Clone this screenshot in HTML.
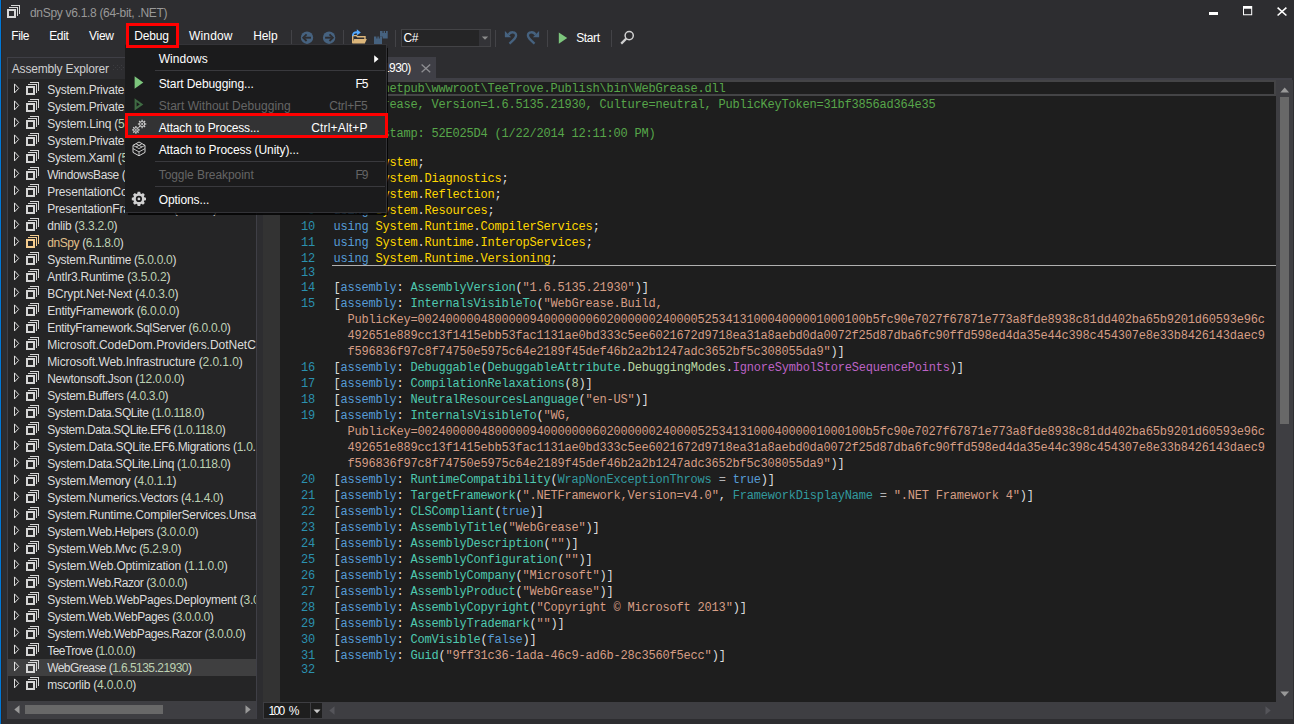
<!DOCTYPE html>
<html><head><meta charset="utf-8"><title>dnSpy</title><style>
html,body{margin:0;padding:0;overflow:hidden;}
html{width:1294px;height:724px;background:#2d2d30;}
body{width:1294px;height:724px;background:#2d2d30;position:relative;overflow:hidden;font-family:"Liberation Sans", sans-serif;}
.t{position:absolute;white-space:pre;font-family:"Liberation Sans", sans-serif;}
.m{font-family:"Liberation Mono", monospace;}
.clip{position:absolute;overflow:hidden;}
</style></head><body>
<div style="position:absolute;left:0px;top:0px;width:1px;height:724px;background:#0078d7;"></div>
<div style="position:absolute;left:1px;top:0px;width:1px;height:724px;background:#2b2729;"></div>
<svg style="position:absolute;left:7px;top:5px;" width="13" height="13" viewBox="0 0 13 13"><path fill="#d8d8d8" fill-rule="evenodd" d="M4,0H13V9H12V1H4Z M2,2H11V11H10V3H2Z M0,4H9V13H0Z M2,6V11H7V6Z"/></svg>
<span id="t67da5d49" class="t" style="left:30px;top:5.0px;line-height:16px;font-size:12px;color:#999999;letter-spacing:-0.304px;">dnSpy v6.1.8 (64-bit, .NET)</span>
<div style="position:absolute;left:1209px;top:11.6px;width:9.3px;height:3px;background:#ffffff;"></div>
<svg style="position:absolute;left:1242.9px;top:5.8px;" width="10" height="10" viewBox="0 0 10 10"><path fill="#fff" fill-rule="evenodd" d="M0,0H9.2V9.3H0Z M1,2.7V8.3H8.2V2.7Z"/></svg>
<svg style="position:absolute;left:1277px;top:6.6px;" width="11" height="10" viewBox="0 0 11 10"><path stroke="#fff" stroke-width="1.6" fill="none" d="M0.6,0.7L9.4,8.5M9.4,0.7L0.6,8.5"/></svg>
<span id="t30e0f102" class="t" style="left:11.3px;top:27.5px;line-height:16px;font-size:12px;color:#ffffff;letter-spacing:-0.412px;">File</span>
<span id="tb5fae09c" class="t" style="left:49.2px;top:27.5px;line-height:16px;font-size:12px;color:#ffffff;letter-spacing:-0.359px;">Edit</span>
<span id="tcee6a132" class="t" style="left:89.0px;top:27.5px;line-height:16px;font-size:12px;color:#ffffff;letter-spacing:-0.264px;">View</span>
<span id="t6776c0da" class="t" style="left:189px;top:27.5px;line-height:16px;font-size:12px;color:#ffffff;letter-spacing:0.164px;">Window</span>
<span id="td5279522" class="t" style="left:253.2px;top:27.5px;line-height:16px;font-size:12px;color:#ffffff;letter-spacing:-0.093px;">Help</span>
<div style="position:absolute;left:291.2px;top:29.5px;width:1px;height:17.5px;background:#434347;"></div>
<div style="position:absolute;left:342.9px;top:29.5px;width:1px;height:17.5px;background:#434347;"></div>
<div style="position:absolute;left:394.9px;top:29.5px;width:1px;height:17.5px;background:#434347;"></div>
<div style="position:absolute;left:495.4px;top:29.5px;width:1px;height:17.5px;background:#434347;"></div>
<div style="position:absolute;left:546.8px;top:29.5px;width:1px;height:17.5px;background:#434347;"></div>
<div style="position:absolute;left:611.1px;top:29.5px;width:1px;height:17.5px;background:#434347;"></div>
<svg style="position:absolute;left:300px;top:31px;" width="14" height="14" viewBox="0 0 14 14"><circle cx="7" cy="6.7" r="6.2" fill="#46627f"/><path d="M11,6.7H4.4" stroke="#2d2d30" stroke-width="1.9" fill="none"/><path d="M6.6,3.4L3.2,6.7L6.6,10" stroke="#2d2d30" stroke-width="1.8" fill="none"/></svg>
<svg style="position:absolute;left:322px;top:31px;" width="14" height="14" viewBox="0 0 14 14"><circle cx="7.1" cy="6.7" r="6.2" fill="#46627f"/><path d="M3.1,6.7H9.7" stroke="#2d2d30" stroke-width="1.9" fill="none"/><path d="M7.5,3.4L10.9,6.7L7.5,10" stroke="#2d2d30" stroke-width="1.8" fill="none"/></svg>
<svg style="position:absolute;left:351px;top:28.2px;" width="17" height="17" viewBox="0 0 17 17"><path d="M1.7,15V7.6H5.4L6.5,8.7H14V11" fill="none" stroke="#dcb67a" stroke-width="1.4"/><path d="M3.2,11H15.8L13.8,15.4H1.2Z" fill="#dcb67a"/><path d="M1.9,8.2C1.6,5.2 3.4,4 6.6,4.3" fill="none" stroke="#55aaff" stroke-width="1.8"/><path d="M5.8,1.2L9.8,4.4L5.8,7.6Z" fill="#55aaff"/></svg>
<svg style="position:absolute;left:373px;top:30px;" width="16" height="16" viewBox="0 0 16 16"><path fill="#46627f" fill-rule="evenodd" d="M7,0.9H14.7V8.6H9.6V6.6H7Z M9.6,0.9V2.9H10.6V0.9Z M12,0.9V2.9H13,V0.9Z"/><path fill="#46627f" fill-rule="evenodd" d="M1,6.6H9V14H1Z M3.4,6.6V8.6H4.4V6.6Z M5.8,6.6V8.6H6.8V6.6Z"/></svg>
<div style="position:absolute;left:401px;top:29px;width:89.5px;height:18px;background:#252526;border:1px solid #434346;box-sizing:border-box;"></div>
<div style="position:absolute;left:478.5px;top:30px;width:11px;height:16px;background:#333337;"></div>
<svg style="position:absolute;left:480.8px;top:36.2px;" width="8" height="5" viewBox="0 0 8 5"><path d="M0.8,0.4H7.2L4,3.8Z" fill="#8c8c8c"/></svg>
<span id="te251bf2a" class="t" style="left:403.4px;top:30.0px;line-height:16px;font-size:12px;color:#ffffff;letter-spacing:-0.240px;">C#</span>
<svg style="position:absolute;left:504px;top:30px;" width="14" height="15" viewBox="0 0 14 15"><path d="M0.9,1.0V7.2H7.1Z" fill="#46627f"/><path d="M4.6,4.8C6,1.4 12.2,1.2 12.1,5.6C12,8 9.5,10 5.4,13.6" fill="none" stroke="#46627f" stroke-width="2.3"/></svg>
<svg style="position:absolute;left:526px;top:30px;" width="14" height="15" viewBox="0 0 14 15"><g transform="translate(14,0) scale(-1,1)"><path d="M0.9,1.0V7.2H7.1Z" fill="#46627f"/><path d="M4.6,4.8C6,1.4 12.2,1.2 12.1,5.6C12,8 9.5,10 5.4,13.6" fill="none" stroke="#46627f" stroke-width="2.3"/></g></svg>
<svg style="position:absolute;left:558px;top:32px;" width="10" height="12" viewBox="0 0 10 12"><path d="M0.8,0.4L9.2,6L0.8,11.7Z" fill="#7dc67d"/></svg>
<span id="t14c7030c" class="t" style="left:576.2px;top:30.0px;line-height:16px;font-size:12px;color:#ffffff;letter-spacing:-0.385px;">Start</span>
<svg style="position:absolute;left:620px;top:30px;" width="15" height="15" viewBox="0 0 15 15"><circle cx="9.2" cy="5.6" r="4.1" fill="none" stroke="#d0d0d0" stroke-width="1.5"/><path d="M6.2,8.6L1.2,13.6" stroke="#d0d0d0" stroke-width="2.2"/></svg>
<div style="position:absolute;left:7px;top:57px;width:250px;height:662px;background:#2d2d30;border:1px solid #3f3f46;box-sizing:border-box;"></div>
<span id="t333f8483" class="t" style="left:11.8px;top:60.5px;line-height:16px;font-size:12px;color:#d0d0d0;letter-spacing:-0.177px;">Assembly Explorer</span>
<svg style="position:absolute;left:113px;top:65px;" width="140" height="6" viewBox="0 0 140 6"><g fill="#3c3c40"><rect x="0" y="0" width="1" height="1"/><rect x="2" y="2" width="1" height="1"/><rect x="0" y="4" width="1" height="1"/><rect x="4" y="0" width="1" height="1"/><rect x="6" y="2" width="1" height="1"/><rect x="4" y="4" width="1" height="1"/><rect x="8" y="0" width="1" height="1"/><rect x="10" y="2" width="1" height="1"/><rect x="8" y="4" width="1" height="1"/><rect x="12" y="0" width="1" height="1"/><rect x="14" y="2" width="1" height="1"/><rect x="12" y="4" width="1" height="1"/><rect x="16" y="0" width="1" height="1"/><rect x="18" y="2" width="1" height="1"/><rect x="16" y="4" width="1" height="1"/><rect x="20" y="0" width="1" height="1"/><rect x="22" y="2" width="1" height="1"/><rect x="20" y="4" width="1" height="1"/><rect x="24" y="0" width="1" height="1"/><rect x="26" y="2" width="1" height="1"/><rect x="24" y="4" width="1" height="1"/><rect x="28" y="0" width="1" height="1"/><rect x="30" y="2" width="1" height="1"/><rect x="28" y="4" width="1" height="1"/><rect x="32" y="0" width="1" height="1"/><rect x="34" y="2" width="1" height="1"/><rect x="32" y="4" width="1" height="1"/><rect x="36" y="0" width="1" height="1"/><rect x="38" y="2" width="1" height="1"/><rect x="36" y="4" width="1" height="1"/><rect x="40" y="0" width="1" height="1"/><rect x="42" y="2" width="1" height="1"/><rect x="40" y="4" width="1" height="1"/><rect x="44" y="0" width="1" height="1"/><rect x="46" y="2" width="1" height="1"/><rect x="44" y="4" width="1" height="1"/><rect x="48" y="0" width="1" height="1"/><rect x="50" y="2" width="1" height="1"/><rect x="48" y="4" width="1" height="1"/><rect x="52" y="0" width="1" height="1"/><rect x="54" y="2" width="1" height="1"/><rect x="52" y="4" width="1" height="1"/><rect x="56" y="0" width="1" height="1"/><rect x="58" y="2" width="1" height="1"/><rect x="56" y="4" width="1" height="1"/><rect x="60" y="0" width="1" height="1"/><rect x="62" y="2" width="1" height="1"/><rect x="60" y="4" width="1" height="1"/><rect x="64" y="0" width="1" height="1"/><rect x="66" y="2" width="1" height="1"/><rect x="64" y="4" width="1" height="1"/><rect x="68" y="0" width="1" height="1"/><rect x="70" y="2" width="1" height="1"/><rect x="68" y="4" width="1" height="1"/><rect x="72" y="0" width="1" height="1"/><rect x="74" y="2" width="1" height="1"/><rect x="72" y="4" width="1" height="1"/><rect x="76" y="0" width="1" height="1"/><rect x="78" y="2" width="1" height="1"/><rect x="76" y="4" width="1" height="1"/><rect x="80" y="0" width="1" height="1"/><rect x="82" y="2" width="1" height="1"/><rect x="80" y="4" width="1" height="1"/><rect x="84" y="0" width="1" height="1"/><rect x="86" y="2" width="1" height="1"/><rect x="84" y="4" width="1" height="1"/><rect x="88" y="0" width="1" height="1"/><rect x="90" y="2" width="1" height="1"/><rect x="88" y="4" width="1" height="1"/><rect x="92" y="0" width="1" height="1"/><rect x="94" y="2" width="1" height="1"/><rect x="92" y="4" width="1" height="1"/><rect x="96" y="0" width="1" height="1"/><rect x="98" y="2" width="1" height="1"/><rect x="96" y="4" width="1" height="1"/><rect x="100" y="0" width="1" height="1"/><rect x="102" y="2" width="1" height="1"/><rect x="100" y="4" width="1" height="1"/><rect x="104" y="0" width="1" height="1"/><rect x="106" y="2" width="1" height="1"/><rect x="104" y="4" width="1" height="1"/><rect x="108" y="0" width="1" height="1"/><rect x="110" y="2" width="1" height="1"/><rect x="108" y="4" width="1" height="1"/><rect x="112" y="0" width="1" height="1"/><rect x="114" y="2" width="1" height="1"/><rect x="112" y="4" width="1" height="1"/><rect x="116" y="0" width="1" height="1"/><rect x="118" y="2" width="1" height="1"/><rect x="116" y="4" width="1" height="1"/><rect x="120" y="0" width="1" height="1"/><rect x="122" y="2" width="1" height="1"/><rect x="120" y="4" width="1" height="1"/><rect x="124" y="0" width="1" height="1"/><rect x="126" y="2" width="1" height="1"/><rect x="124" y="4" width="1" height="1"/><rect x="128" y="0" width="1" height="1"/><rect x="130" y="2" width="1" height="1"/><rect x="128" y="4" width="1" height="1"/><rect x="132" y="0" width="1" height="1"/><rect x="134" y="2" width="1" height="1"/><rect x="132" y="4" width="1" height="1"/></g></svg>
<div style="position:absolute;left:8px;top:79px;width:248px;height:622px;background:#252526;"></div>
<div class="clip" style="left:8px;top:80px;width:248px;height:620px;">
<svg style="position:absolute;left:5px;top:2.5px;" width="8" height="12" viewBox="0 0 8 12"><path d="M1.5,0.9L5.7,5.4L1.5,9.9Z" fill="none" stroke="#e0e0e0" stroke-width="1"/></svg>
<svg style="position:absolute;left:18px;top:2px;" width="13" height="13" viewBox="0 0 13 13"><path fill="#d6d6d6" fill-rule="evenodd" d="M4,0H13V9H12V1H4Z M2,2H11V11H10V3H2Z M0,4H9V13H0Z M2,6V11H7V6Z"/></svg>
<span id="t3e045100" class="t" style="left:39.2px;top:1.5px;line-height:17px;font-size:12px;color:#dcdcdc;letter-spacing:-0.268px;">System.Private.CoreLib <span style="color:#dcdcdc">(<span style="color:#bcd1b1">5</span>.<span style="color:#bcd1b1">0</span>.<span style="color:#bcd1b1">0</span>.<span style="color:#bcd1b1">0</span>)</span></span>
<svg style="position:absolute;left:5px;top:19.5px;" width="8" height="12" viewBox="0 0 8 12"><path d="M1.5,0.9L5.7,5.4L1.5,9.9Z" fill="none" stroke="#e0e0e0" stroke-width="1"/></svg>
<svg style="position:absolute;left:18px;top:19px;" width="13" height="13" viewBox="0 0 13 13"><path fill="#d6d6d6" fill-rule="evenodd" d="M4,0H13V9H12V1H4Z M2,2H11V11H10V3H2Z M0,4H9V13H0Z M2,6V11H7V6Z"/></svg>
<span id="t5269d351" class="t" style="left:39.2px;top:18.5px;line-height:17px;font-size:12px;color:#dcdcdc;letter-spacing:-0.268px;">System.Private.Uri <span style="color:#dcdcdc">(<span style="color:#bcd1b1">5</span>.<span style="color:#bcd1b1">0</span>.<span style="color:#bcd1b1">0</span>.<span style="color:#bcd1b1">0</span>)</span></span>
<svg style="position:absolute;left:5px;top:36.5px;" width="8" height="12" viewBox="0 0 8 12"><path d="M1.5,0.9L5.7,5.4L1.5,9.9Z" fill="none" stroke="#e0e0e0" stroke-width="1"/></svg>
<svg style="position:absolute;left:18px;top:36px;" width="13" height="13" viewBox="0 0 13 13"><path fill="#d6d6d6" fill-rule="evenodd" d="M4,0H13V9H12V1H4Z M2,2H11V11H10V3H2Z M0,4H9V13H0Z M2,6V11H7V6Z"/></svg>
<span id="tb27f8752" class="t" style="left:39.2px;top:35.5px;line-height:17px;font-size:12px;color:#dcdcdc;letter-spacing:-0.188px;">System.Linq <span style="color:#dcdcdc">(<span style="color:#bcd1b1">5</span>.<span style="color:#bcd1b1">0</span>.<span style="color:#bcd1b1">0</span>.<span style="color:#bcd1b1">0</span>)</span></span>
<svg style="position:absolute;left:5px;top:53.5px;" width="8" height="12" viewBox="0 0 8 12"><path d="M1.5,0.9L5.7,5.4L1.5,9.9Z" fill="none" stroke="#e0e0e0" stroke-width="1"/></svg>
<svg style="position:absolute;left:18px;top:53px;" width="13" height="13" viewBox="0 0 13 13"><path fill="#d6d6d6" fill-rule="evenodd" d="M4,0H13V9H12V1H4Z M2,2H11V11H10V3H2Z M0,4H9V13H0Z M2,6V11H7V6Z"/></svg>
<span id="ta4e3a844" class="t" style="left:39.2px;top:52.5px;line-height:17px;font-size:12px;color:#dcdcdc;letter-spacing:-0.268px;">System.Private.Xml <span style="color:#dcdcdc">(<span style="color:#bcd1b1">5</span>.<span style="color:#bcd1b1">0</span>.<span style="color:#bcd1b1">0</span>.<span style="color:#bcd1b1">0</span>)</span></span>
<svg style="position:absolute;left:5px;top:70.5px;" width="8" height="12" viewBox="0 0 8 12"><path d="M1.5,0.9L5.7,5.4L1.5,9.9Z" fill="none" stroke="#e0e0e0" stroke-width="1"/></svg>
<svg style="position:absolute;left:18px;top:70px;" width="13" height="13" viewBox="0 0 13 13"><path fill="#d6d6d6" fill-rule="evenodd" d="M4,0H13V9H12V1H4Z M2,2H11V11H10V3H2Z M0,4H9V13H0Z M2,6V11H7V6Z"/></svg>
<span id="t401e9754" class="t" style="left:39.2px;top:69.5px;line-height:17px;font-size:12px;color:#dcdcdc;letter-spacing:-0.293px;">System.Xaml <span style="color:#dcdcdc">(<span style="color:#bcd1b1">5</span>.<span style="color:#bcd1b1">0</span>.<span style="color:#bcd1b1">0</span>.<span style="color:#bcd1b1">0</span>)</span></span>
<svg style="position:absolute;left:5px;top:87.5px;" width="8" height="12" viewBox="0 0 8 12"><path d="M1.5,0.9L5.7,5.4L1.5,9.9Z" fill="none" stroke="#e0e0e0" stroke-width="1"/></svg>
<svg style="position:absolute;left:18px;top:87px;" width="13" height="13" viewBox="0 0 13 13"><path fill="#d6d6d6" fill-rule="evenodd" d="M4,0H13V9H12V1H4Z M2,2H11V11H10V3H2Z M0,4H9V13H0Z M2,6V11H7V6Z"/></svg>
<span id="t6494964a" class="t" style="left:39.2px;top:86.5px;line-height:17px;font-size:12px;color:#dcdcdc;letter-spacing:-0.403px;">WindowsBase <span style="color:#dcdcdc">(<span style="color:#bcd1b1">5</span>.<span style="color:#bcd1b1">0</span>.<span style="color:#bcd1b1">0</span>.<span style="color:#bcd1b1">0</span>)</span></span>
<svg style="position:absolute;left:5px;top:104.5px;" width="8" height="12" viewBox="0 0 8 12"><path d="M1.5,0.9L5.7,5.4L1.5,9.9Z" fill="none" stroke="#e0e0e0" stroke-width="1"/></svg>
<svg style="position:absolute;left:18px;top:104px;" width="13" height="13" viewBox="0 0 13 13"><path fill="#d6d6d6" fill-rule="evenodd" d="M4,0H13V9H12V1H4Z M2,2H11V11H10V3H2Z M0,4H9V13H0Z M2,6V11H7V6Z"/></svg>
<span id="te6ad986d" class="t" style="left:39.2px;top:103.5px;line-height:17px;font-size:12px;color:#dcdcdc;letter-spacing:-0.170px;">PresentationCore <span style="color:#dcdcdc">(<span style="color:#bcd1b1">5</span>.<span style="color:#bcd1b1">0</span>.<span style="color:#bcd1b1">0</span>.<span style="color:#bcd1b1">0</span>)</span></span>
<svg style="position:absolute;left:5px;top:121.5px;" width="8" height="12" viewBox="0 0 8 12"><path d="M1.5,0.9L5.7,5.4L1.5,9.9Z" fill="none" stroke="#e0e0e0" stroke-width="1"/></svg>
<svg style="position:absolute;left:18px;top:121px;" width="13" height="13" viewBox="0 0 13 13"><path fill="#d6d6d6" fill-rule="evenodd" d="M4,0H13V9H12V1H4Z M2,2H11V11H10V3H2Z M0,4H9V13H0Z M2,6V11H7V6Z"/></svg>
<span id="tdfc4b7b8" class="t" style="left:39.2px;top:120.5px;line-height:17px;font-size:12px;color:#dcdcdc;letter-spacing:-0.185px;">PresentationFramework <span style="color:#dcdcdc">(<span style="color:#bcd1b1">5</span>.<span style="color:#bcd1b1">0</span>.<span style="color:#bcd1b1">0</span>.<span style="color:#bcd1b1">0</span>)</span></span>
<svg style="position:absolute;left:5px;top:138.5px;" width="8" height="12" viewBox="0 0 8 12"><path d="M1.5,0.9L5.7,5.4L1.5,9.9Z" fill="none" stroke="#e0e0e0" stroke-width="1"/></svg>
<svg style="position:absolute;left:18px;top:138px;" width="13" height="13" viewBox="0 0 13 13"><path fill="#d6d6d6" fill-rule="evenodd" d="M4,0H13V9H12V1H4Z M2,2H11V11H10V3H2Z M0,4H9V13H0Z M2,6V11H7V6Z"/></svg>
<span id="tebb21db2" class="t" style="left:39.2px;top:137.5px;line-height:17px;font-size:12px;color:#dcdcdc;letter-spacing:-0.220px;">dnlib <span style="color:#dcdcdc">(<span style="color:#bcd1b1">3</span>.<span style="color:#bcd1b1">3</span>.<span style="color:#bcd1b1">2</span>.<span style="color:#bcd1b1">0</span>)</span></span>
<svg style="position:absolute;left:5px;top:155.5px;" width="8" height="12" viewBox="0 0 8 12"><path d="M1.5,0.9L5.7,5.4L1.5,9.9Z" fill="none" stroke="#e0e0e0" stroke-width="1"/></svg>
<svg style="position:absolute;left:18px;top:155px;" width="13" height="13" viewBox="0 0 13 13"><path fill="#f6cd8f" fill-rule="evenodd" d="M4,0H13V9H12V1H4Z M2,2H11V11H10V3H2Z M0,4H9V13H0Z M2,6V11H7V6Z"/></svg>
<span id="t77820c18" class="t" style="left:39.2px;top:154.5px;line-height:17px;font-size:12px;color:#e0c08a;letter-spacing:-0.403px;">dnSpy <span style="color:#dcdcdc">(<span style="color:#bcd1b1">6</span>.<span style="color:#bcd1b1">1</span>.<span style="color:#bcd1b1">8</span>.<span style="color:#bcd1b1">0</span>)</span></span>
<svg style="position:absolute;left:5px;top:172.5px;" width="8" height="12" viewBox="0 0 8 12"><path d="M1.5,0.9L5.7,5.4L1.5,9.9Z" fill="none" stroke="#e0e0e0" stroke-width="1"/></svg>
<svg style="position:absolute;left:18px;top:172px;" width="13" height="13" viewBox="0 0 13 13"><path fill="#d6d6d6" fill-rule="evenodd" d="M4,0H13V9H12V1H4Z M2,2H11V11H10V3H2Z M0,4H9V13H0Z M2,6V11H7V6Z"/></svg>
<span id="t0015b76b" class="t" style="left:39.2px;top:171.5px;line-height:17px;font-size:12px;color:#dcdcdc;letter-spacing:-0.298px;">System.Runtime <span style="color:#dcdcdc">(<span style="color:#bcd1b1">5</span>.<span style="color:#bcd1b1">0</span>.<span style="color:#bcd1b1">0</span>.<span style="color:#bcd1b1">0</span>)</span></span>
<svg style="position:absolute;left:5px;top:189.5px;" width="8" height="12" viewBox="0 0 8 12"><path d="M1.5,0.9L5.7,5.4L1.5,9.9Z" fill="none" stroke="#e0e0e0" stroke-width="1"/></svg>
<svg style="position:absolute;left:18px;top:189px;" width="13" height="13" viewBox="0 0 13 13"><path fill="#d6d6d6" fill-rule="evenodd" d="M4,0H13V9H12V1H4Z M2,2H11V11H10V3H2Z M0,4H9V13H0Z M2,6V11H7V6Z"/></svg>
<span id="t693a5afe" class="t" style="left:39.2px;top:188.5px;line-height:17px;font-size:12px;color:#dcdcdc;letter-spacing:-0.182px;">Antlr3.Runtime <span style="color:#dcdcdc">(<span style="color:#bcd1b1">3</span>.<span style="color:#bcd1b1">5</span>.<span style="color:#bcd1b1">0</span>.<span style="color:#bcd1b1">2</span>)</span></span>
<svg style="position:absolute;left:5px;top:206.5px;" width="8" height="12" viewBox="0 0 8 12"><path d="M1.5,0.9L5.7,5.4L1.5,9.9Z" fill="none" stroke="#e0e0e0" stroke-width="1"/></svg>
<svg style="position:absolute;left:18px;top:206px;" width="13" height="13" viewBox="0 0 13 13"><path fill="#d6d6d6" fill-rule="evenodd" d="M4,0H13V9H12V1H4Z M2,2H11V11H10V3H2Z M0,4H9V13H0Z M2,6V11H7V6Z"/></svg>
<span id="t54f8b847" class="t" style="left:39.2px;top:205.5px;line-height:17px;font-size:12px;color:#dcdcdc;letter-spacing:-0.174px;">BCrypt.Net-Next <span style="color:#dcdcdc">(<span style="color:#bcd1b1">4</span>.<span style="color:#bcd1b1">0</span>.<span style="color:#bcd1b1">3</span>.<span style="color:#bcd1b1">0</span>)</span></span>
<svg style="position:absolute;left:5px;top:223.5px;" width="8" height="12" viewBox="0 0 8 12"><path d="M1.5,0.9L5.7,5.4L1.5,9.9Z" fill="none" stroke="#e0e0e0" stroke-width="1"/></svg>
<svg style="position:absolute;left:18px;top:223px;" width="13" height="13" viewBox="0 0 13 13"><path fill="#d6d6d6" fill-rule="evenodd" d="M4,0H13V9H12V1H4Z M2,2H11V11H10V3H2Z M0,4H9V13H0Z M2,6V11H7V6Z"/></svg>
<span id="t29816124" class="t" style="left:39.2px;top:222.5px;line-height:17px;font-size:12px;color:#dcdcdc;letter-spacing:-0.243px;">EntityFramework <span style="color:#dcdcdc">(<span style="color:#bcd1b1">6</span>.<span style="color:#bcd1b1">0</span>.<span style="color:#bcd1b1">0</span>.<span style="color:#bcd1b1">0</span>)</span></span>
<svg style="position:absolute;left:5px;top:240.5px;" width="8" height="12" viewBox="0 0 8 12"><path d="M1.5,0.9L5.7,5.4L1.5,9.9Z" fill="none" stroke="#e0e0e0" stroke-width="1"/></svg>
<svg style="position:absolute;left:18px;top:240px;" width="13" height="13" viewBox="0 0 13 13"><path fill="#d6d6d6" fill-rule="evenodd" d="M4,0H13V9H12V1H4Z M2,2H11V11H10V3H2Z M0,4H9V13H0Z M2,6V11H7V6Z"/></svg>
<span id="tad827aea" class="t" style="left:39.2px;top:239.5px;line-height:17px;font-size:12px;color:#dcdcdc;letter-spacing:-0.311px;">EntityFramework.SqlServer <span style="color:#dcdcdc">(<span style="color:#bcd1b1">6</span>.<span style="color:#bcd1b1">0</span>.<span style="color:#bcd1b1">0</span>.<span style="color:#bcd1b1">0</span>)</span></span>
<svg style="position:absolute;left:5px;top:257.5px;" width="8" height="12" viewBox="0 0 8 12"><path d="M1.5,0.9L5.7,5.4L1.5,9.9Z" fill="none" stroke="#e0e0e0" stroke-width="1"/></svg>
<svg style="position:absolute;left:18px;top:257px;" width="13" height="13" viewBox="0 0 13 13"><path fill="#d6d6d6" fill-rule="evenodd" d="M4,0H13V9H12V1H4Z M2,2H11V11H10V3H2Z M0,4H9V13H0Z M2,6V11H7V6Z"/></svg>
<span id="t3afa6d6d" class="t" style="left:39.2px;top:256.5px;line-height:17px;font-size:12px;color:#dcdcdc;letter-spacing:-0.023px;">Microsoft.CodeDom.Providers.DotNetCompilerPlatform <span style="color:#dcdcdc">(<span style="color:#bcd1b1">2</span>.<span style="color:#bcd1b1">0</span>.<span style="color:#bcd1b1">1</span>.<span style="color:#bcd1b1">0</span>)</span></span>
<svg style="position:absolute;left:5px;top:274.5px;" width="8" height="12" viewBox="0 0 8 12"><path d="M1.5,0.9L5.7,5.4L1.5,9.9Z" fill="none" stroke="#e0e0e0" stroke-width="1"/></svg>
<svg style="position:absolute;left:18px;top:274px;" width="13" height="13" viewBox="0 0 13 13"><path fill="#d6d6d6" fill-rule="evenodd" d="M4,0H13V9H12V1H4Z M2,2H11V11H10V3H2Z M0,4H9V13H0Z M2,6V11H7V6Z"/></svg>
<span id="t1c48b3ff" class="t" style="left:39.2px;top:273.5px;line-height:17px;font-size:12px;color:#dcdcdc;letter-spacing:-0.082px;">Microsoft.Web.Infrastructure <span style="color:#dcdcdc">(<span style="color:#bcd1b1">2</span>.<span style="color:#bcd1b1">0</span>.<span style="color:#bcd1b1">1</span>.<span style="color:#bcd1b1">0</span>)</span></span>
<svg style="position:absolute;left:5px;top:291.5px;" width="8" height="12" viewBox="0 0 8 12"><path d="M1.5,0.9L5.7,5.4L1.5,9.9Z" fill="none" stroke="#e0e0e0" stroke-width="1"/></svg>
<svg style="position:absolute;left:18px;top:291px;" width="13" height="13" viewBox="0 0 13 13"><path fill="#d6d6d6" fill-rule="evenodd" d="M4,0H13V9H12V1H4Z M2,2H11V11H10V3H2Z M0,4H9V13H0Z M2,6V11H7V6Z"/></svg>
<span id="t37998730" class="t" style="left:39.2px;top:290.5px;line-height:17px;font-size:12px;color:#dcdcdc;letter-spacing:-0.248px;">Newtonsoft.Json <span style="color:#dcdcdc">(<span style="color:#bcd1b1">1</span><span style="color:#bcd1b1">2</span>.<span style="color:#bcd1b1">0</span>.<span style="color:#bcd1b1">0</span>.<span style="color:#bcd1b1">0</span>)</span></span>
<svg style="position:absolute;left:5px;top:308.5px;" width="8" height="12" viewBox="0 0 8 12"><path d="M1.5,0.9L5.7,5.4L1.5,9.9Z" fill="none" stroke="#e0e0e0" stroke-width="1"/></svg>
<svg style="position:absolute;left:18px;top:308px;" width="13" height="13" viewBox="0 0 13 13"><path fill="#d6d6d6" fill-rule="evenodd" d="M4,0H13V9H12V1H4Z M2,2H11V11H10V3H2Z M0,4H9V13H0Z M2,6V11H7V6Z"/></svg>
<span id="t1076bc13" class="t" style="left:39.2px;top:307.5px;line-height:17px;font-size:12px;color:#dcdcdc;letter-spacing:-0.346px;">System.Buffers <span style="color:#dcdcdc">(<span style="color:#bcd1b1">4</span>.<span style="color:#bcd1b1">0</span>.<span style="color:#bcd1b1">3</span>.<span style="color:#bcd1b1">0</span>)</span></span>
<svg style="position:absolute;left:5px;top:325.5px;" width="8" height="12" viewBox="0 0 8 12"><path d="M1.5,0.9L5.7,5.4L1.5,9.9Z" fill="none" stroke="#e0e0e0" stroke-width="1"/></svg>
<svg style="position:absolute;left:18px;top:325px;" width="13" height="13" viewBox="0 0 13 13"><path fill="#d6d6d6" fill-rule="evenodd" d="M4,0H13V9H12V1H4Z M2,2H11V11H10V3H2Z M0,4H9V13H0Z M2,6V11H7V6Z"/></svg>
<span id="t38d84cc3" class="t" style="left:39.2px;top:324.5px;line-height:17px;font-size:12px;color:#dcdcdc;letter-spacing:-0.410px;">System.Data.SQLite <span style="color:#dcdcdc">(<span style="color:#bcd1b1">1</span>.<span style="color:#bcd1b1">0</span>.<span style="color:#bcd1b1">1</span><span style="color:#bcd1b1">1</span><span style="color:#bcd1b1">8</span>.<span style="color:#bcd1b1">0</span>)</span></span>
<svg style="position:absolute;left:5px;top:342.5px;" width="8" height="12" viewBox="0 0 8 12"><path d="M1.5,0.9L5.7,5.4L1.5,9.9Z" fill="none" stroke="#e0e0e0" stroke-width="1"/></svg>
<svg style="position:absolute;left:18px;top:342px;" width="13" height="13" viewBox="0 0 13 13"><path fill="#d6d6d6" fill-rule="evenodd" d="M4,0H13V9H12V1H4Z M2,2H11V11H10V3H2Z M0,4H9V13H0Z M2,6V11H7V6Z"/></svg>
<span id="t6ff16823" class="t" style="left:39.2px;top:341.5px;line-height:17px;font-size:12px;color:#dcdcdc;letter-spacing:-0.489px;">System.Data.SQLite.EF6 <span style="color:#dcdcdc">(<span style="color:#bcd1b1">1</span>.<span style="color:#bcd1b1">0</span>.<span style="color:#bcd1b1">1</span><span style="color:#bcd1b1">1</span><span style="color:#bcd1b1">8</span>.<span style="color:#bcd1b1">0</span>)</span></span>
<svg style="position:absolute;left:5px;top:359.5px;" width="8" height="12" viewBox="0 0 8 12"><path d="M1.5,0.9L5.7,5.4L1.5,9.9Z" fill="none" stroke="#e0e0e0" stroke-width="1"/></svg>
<svg style="position:absolute;left:18px;top:359px;" width="13" height="13" viewBox="0 0 13 13"><path fill="#d6d6d6" fill-rule="evenodd" d="M4,0H13V9H12V1H4Z M2,2H11V11H10V3H2Z M0,4H9V13H0Z M2,6V11H7V6Z"/></svg>
<span id="t6e536f5d" class="t" style="left:39.2px;top:358.5px;line-height:17px;font-size:12px;color:#dcdcdc;letter-spacing:-0.302px;">System.Data.SQLite.EF6.Migrations <span style="color:#dcdcdc">(<span style="color:#bcd1b1">1</span>.<span style="color:#bcd1b1">0</span>.<span style="color:#bcd1b1">1</span><span style="color:#bcd1b1">1</span><span style="color:#bcd1b1">8</span>.<span style="color:#bcd1b1">0</span>)</span></span>
<svg style="position:absolute;left:5px;top:376.5px;" width="8" height="12" viewBox="0 0 8 12"><path d="M1.5,0.9L5.7,5.4L1.5,9.9Z" fill="none" stroke="#e0e0e0" stroke-width="1"/></svg>
<svg style="position:absolute;left:18px;top:376px;" width="13" height="13" viewBox="0 0 13 13"><path fill="#d6d6d6" fill-rule="evenodd" d="M4,0H13V9H12V1H4Z M2,2H11V11H10V3H2Z M0,4H9V13H0Z M2,6V11H7V6Z"/></svg>
<span id="t61a6809c" class="t" style="left:39.2px;top:375.5px;line-height:17px;font-size:12px;color:#dcdcdc;letter-spacing:-0.344px;">System.Data.SQLite.Linq <span style="color:#dcdcdc">(<span style="color:#bcd1b1">1</span>.<span style="color:#bcd1b1">0</span>.<span style="color:#bcd1b1">1</span><span style="color:#bcd1b1">1</span><span style="color:#bcd1b1">8</span>.<span style="color:#bcd1b1">0</span>)</span></span>
<svg style="position:absolute;left:5px;top:393.5px;" width="8" height="12" viewBox="0 0 8 12"><path d="M1.5,0.9L5.7,5.4L1.5,9.9Z" fill="none" stroke="#e0e0e0" stroke-width="1"/></svg>
<svg style="position:absolute;left:18px;top:393px;" width="13" height="13" viewBox="0 0 13 13"><path fill="#d6d6d6" fill-rule="evenodd" d="M4,0H13V9H12V1H4Z M2,2H11V11H10V3H2Z M0,4H9V13H0Z M2,6V11H7V6Z"/></svg>
<span id="t09eda8de" class="t" style="left:39.2px;top:392.5px;line-height:17px;font-size:12px;color:#dcdcdc;letter-spacing:-0.250px;">System.Memory <span style="color:#dcdcdc">(<span style="color:#bcd1b1">4</span>.<span style="color:#bcd1b1">0</span>.<span style="color:#bcd1b1">1</span>.<span style="color:#bcd1b1">1</span>)</span></span>
<svg style="position:absolute;left:5px;top:410.5px;" width="8" height="12" viewBox="0 0 8 12"><path d="M1.5,0.9L5.7,5.4L1.5,9.9Z" fill="none" stroke="#e0e0e0" stroke-width="1"/></svg>
<svg style="position:absolute;left:18px;top:410px;" width="13" height="13" viewBox="0 0 13 13"><path fill="#d6d6d6" fill-rule="evenodd" d="M4,0H13V9H12V1H4Z M2,2H11V11H10V3H2Z M0,4H9V13H0Z M2,6V11H7V6Z"/></svg>
<span id="tceddcee4" class="t" style="left:39.2px;top:409.5px;line-height:17px;font-size:12px;color:#dcdcdc;letter-spacing:-0.287px;">System.Numerics.Vectors <span style="color:#dcdcdc">(<span style="color:#bcd1b1">4</span>.<span style="color:#bcd1b1">1</span>.<span style="color:#bcd1b1">4</span>.<span style="color:#bcd1b1">0</span>)</span></span>
<svg style="position:absolute;left:5px;top:427.5px;" width="8" height="12" viewBox="0 0 8 12"><path d="M1.5,0.9L5.7,5.4L1.5,9.9Z" fill="none" stroke="#e0e0e0" stroke-width="1"/></svg>
<svg style="position:absolute;left:18px;top:427px;" width="13" height="13" viewBox="0 0 13 13"><path fill="#d6d6d6" fill-rule="evenodd" d="M4,0H13V9H12V1H4Z M2,2H11V11H10V3H2Z M0,4H9V13H0Z M2,6V11H7V6Z"/></svg>
<span id="t53802432" class="t" style="left:39.2px;top:426.5px;line-height:17px;font-size:12px;color:#dcdcdc;letter-spacing:-0.221px;">System.Runtime.CompilerServices.Unsafe <span style="color:#dcdcdc">(<span style="color:#bcd1b1">4</span>.<span style="color:#bcd1b1">0</span>.<span style="color:#bcd1b1">4</span>.<span style="color:#bcd1b1">1</span>)</span></span>
<svg style="position:absolute;left:5px;top:444.5px;" width="8" height="12" viewBox="0 0 8 12"><path d="M1.5,0.9L5.7,5.4L1.5,9.9Z" fill="none" stroke="#e0e0e0" stroke-width="1"/></svg>
<svg style="position:absolute;left:18px;top:444px;" width="13" height="13" viewBox="0 0 13 13"><path fill="#d6d6d6" fill-rule="evenodd" d="M4,0H13V9H12V1H4Z M2,2H11V11H10V3H2Z M0,4H9V13H0Z M2,6V11H7V6Z"/></svg>
<span id="t8f6677f9" class="t" style="left:39.2px;top:443.5px;line-height:17px;font-size:12px;color:#dcdcdc;letter-spacing:-0.341px;">System.Web.Helpers <span style="color:#dcdcdc">(<span style="color:#bcd1b1">3</span>.<span style="color:#bcd1b1">0</span>.<span style="color:#bcd1b1">0</span>.<span style="color:#bcd1b1">0</span>)</span></span>
<svg style="position:absolute;left:5px;top:461.5px;" width="8" height="12" viewBox="0 0 8 12"><path d="M1.5,0.9L5.7,5.4L1.5,9.9Z" fill="none" stroke="#e0e0e0" stroke-width="1"/></svg>
<svg style="position:absolute;left:18px;top:461px;" width="13" height="13" viewBox="0 0 13 13"><path fill="#d6d6d6" fill-rule="evenodd" d="M4,0H13V9H12V1H4Z M2,2H11V11H10V3H2Z M0,4H9V13H0Z M2,6V11H7V6Z"/></svg>
<span id="t9b7e5282" class="t" style="left:39.2px;top:460.5px;line-height:17px;font-size:12px;color:#dcdcdc;letter-spacing:-0.302px;">System.Web.Mvc <span style="color:#dcdcdc">(<span style="color:#bcd1b1">5</span>.<span style="color:#bcd1b1">2</span>.<span style="color:#bcd1b1">9</span>.<span style="color:#bcd1b1">0</span>)</span></span>
<svg style="position:absolute;left:5px;top:478.5px;" width="8" height="12" viewBox="0 0 8 12"><path d="M1.5,0.9L5.7,5.4L1.5,9.9Z" fill="none" stroke="#e0e0e0" stroke-width="1"/></svg>
<svg style="position:absolute;left:18px;top:478px;" width="13" height="13" viewBox="0 0 13 13"><path fill="#d6d6d6" fill-rule="evenodd" d="M4,0H13V9H12V1H4Z M2,2H11V11H10V3H2Z M0,4H9V13H0Z M2,6V11H7V6Z"/></svg>
<span id="tb06d128d" class="t" style="left:39.2px;top:477.5px;line-height:17px;font-size:12px;color:#dcdcdc;letter-spacing:-0.170px;">System.Web.Optimization <span style="color:#dcdcdc">(<span style="color:#bcd1b1">1</span>.<span style="color:#bcd1b1">1</span>.<span style="color:#bcd1b1">0</span>.<span style="color:#bcd1b1">0</span>)</span></span>
<svg style="position:absolute;left:5px;top:495.5px;" width="8" height="12" viewBox="0 0 8 12"><path d="M1.5,0.9L5.7,5.4L1.5,9.9Z" fill="none" stroke="#e0e0e0" stroke-width="1"/></svg>
<svg style="position:absolute;left:18px;top:495px;" width="13" height="13" viewBox="0 0 13 13"><path fill="#d6d6d6" fill-rule="evenodd" d="M4,0H13V9H12V1H4Z M2,2H11V11H10V3H2Z M0,4H9V13H0Z M2,6V11H7V6Z"/></svg>
<span id="tcfe91347" class="t" style="left:39.2px;top:494.5px;line-height:17px;font-size:12px;color:#dcdcdc;letter-spacing:-0.435px;">System.Web.Razor <span style="color:#dcdcdc">(<span style="color:#bcd1b1">3</span>.<span style="color:#bcd1b1">0</span>.<span style="color:#bcd1b1">0</span>.<span style="color:#bcd1b1">0</span>)</span></span>
<svg style="position:absolute;left:5px;top:512.5px;" width="8" height="12" viewBox="0 0 8 12"><path d="M1.5,0.9L5.7,5.4L1.5,9.9Z" fill="none" stroke="#e0e0e0" stroke-width="1"/></svg>
<svg style="position:absolute;left:18px;top:512px;" width="13" height="13" viewBox="0 0 13 13"><path fill="#d6d6d6" fill-rule="evenodd" d="M4,0H13V9H12V1H4Z M2,2H11V11H10V3H2Z M0,4H9V13H0Z M2,6V11H7V6Z"/></svg>
<span id="t3fc82140" class="t" style="left:39.2px;top:511.5px;line-height:17px;font-size:12px;color:#dcdcdc;letter-spacing:-0.252px;">System.Web.WebPages.Deployment <span style="color:#dcdcdc">(<span style="color:#bcd1b1">3</span>.<span style="color:#bcd1b1">0</span>.<span style="color:#bcd1b1">0</span>.<span style="color:#bcd1b1">0</span>)</span></span>
<svg style="position:absolute;left:5px;top:529.5px;" width="8" height="12" viewBox="0 0 8 12"><path d="M1.5,0.9L5.7,5.4L1.5,9.9Z" fill="none" stroke="#e0e0e0" stroke-width="1"/></svg>
<svg style="position:absolute;left:18px;top:529px;" width="13" height="13" viewBox="0 0 13 13"><path fill="#d6d6d6" fill-rule="evenodd" d="M4,0H13V9H12V1H4Z M2,2H11V11H10V3H2Z M0,4H9V13H0Z M2,6V11H7V6Z"/></svg>
<span id="t0a57ad72" class="t" style="left:39.2px;top:528.5px;line-height:17px;font-size:12px;color:#dcdcdc;letter-spacing:-0.401px;">System.Web.WebPages <span style="color:#dcdcdc">(<span style="color:#bcd1b1">3</span>.<span style="color:#bcd1b1">0</span>.<span style="color:#bcd1b1">0</span>.<span style="color:#bcd1b1">0</span>)</span></span>
<svg style="position:absolute;left:5px;top:546.5px;" width="8" height="12" viewBox="0 0 8 12"><path d="M1.5,0.9L5.7,5.4L1.5,9.9Z" fill="none" stroke="#e0e0e0" stroke-width="1"/></svg>
<svg style="position:absolute;left:18px;top:546px;" width="13" height="13" viewBox="0 0 13 13"><path fill="#d6d6d6" fill-rule="evenodd" d="M4,0H13V9H12V1H4Z M2,2H11V11H10V3H2Z M0,4H9V13H0Z M2,6V11H7V6Z"/></svg>
<span id="t275ef23f" class="t" style="left:39.2px;top:545.5px;line-height:17px;font-size:12px;color:#dcdcdc;letter-spacing:-0.426px;">System.Web.WebPages.Razor <span style="color:#dcdcdc">(<span style="color:#bcd1b1">3</span>.<span style="color:#bcd1b1">0</span>.<span style="color:#bcd1b1">0</span>.<span style="color:#bcd1b1">0</span>)</span></span>
<svg style="position:absolute;left:5px;top:563.5px;" width="8" height="12" viewBox="0 0 8 12"><path d="M1.5,0.9L5.7,5.4L1.5,9.9Z" fill="none" stroke="#e0e0e0" stroke-width="1"/></svg>
<svg style="position:absolute;left:18px;top:563px;" width="13" height="13" viewBox="0 0 13 13"><path fill="#d6d6d6" fill-rule="evenodd" d="M4,0H13V9H12V1H4Z M2,2H11V11H10V3H2Z M0,4H9V13H0Z M2,6V11H7V6Z"/></svg>
<span id="t8fae422d" class="t" style="left:39.2px;top:562.5px;line-height:17px;font-size:12px;color:#dcdcdc;letter-spacing:-0.553px;">TeeTrove <span style="color:#dcdcdc">(<span style="color:#bcd1b1">1</span>.<span style="color:#bcd1b1">0</span>.<span style="color:#bcd1b1">0</span>.<span style="color:#bcd1b1">0</span>)</span></span>
<div style="position:absolute;left:0px;top:579px;width:248px;height:17px;background:#3f3f40;"></div>
<svg style="position:absolute;left:5px;top:580.5px;" width="8" height="12" viewBox="0 0 8 12"><path d="M1.5,0.9L5.7,5.4L1.5,9.9Z" fill="none" stroke="#e0e0e0" stroke-width="1"/></svg>
<svg style="position:absolute;left:18px;top:580px;" width="13" height="13" viewBox="0 0 13 13"><path fill="#d6d6d6" fill-rule="evenodd" d="M4,0H13V9H12V1H4Z M2,2H11V11H10V3H2Z M0,4H9V13H0Z M2,6V11H7V6Z"/></svg>
<span id="t185d0cce" class="t" style="left:39.2px;top:579.5px;line-height:17px;font-size:12px;color:#dcdcdc;letter-spacing:-0.562px;">WebGrease <span style="color:#dcdcdc">(<span style="color:#bcd1b1">1</span>.<span style="color:#bcd1b1">6</span>.<span style="color:#bcd1b1">5</span><span style="color:#bcd1b1">1</span><span style="color:#bcd1b1">3</span><span style="color:#bcd1b1">5</span>.<span style="color:#bcd1b1">2</span><span style="color:#bcd1b1">1</span><span style="color:#bcd1b1">9</span><span style="color:#bcd1b1">3</span><span style="color:#bcd1b1">0</span>)</span></span>
<svg style="position:absolute;left:5px;top:597.5px;" width="8" height="12" viewBox="0 0 8 12"><path d="M1.5,0.9L5.7,5.4L1.5,9.9Z" fill="none" stroke="#e0e0e0" stroke-width="1"/></svg>
<svg style="position:absolute;left:18px;top:597px;" width="13" height="13" viewBox="0 0 13 13"><path fill="#d6d6d6" fill-rule="evenodd" d="M4,0H13V9H12V1H4Z M2,2H11V11H10V3H2Z M0,4H9V13H0Z M2,6V11H7V6Z"/></svg>
<span id="t8318caf6" class="t" style="left:39.2px;top:596.5px;line-height:17px;font-size:12px;color:#dcdcdc;letter-spacing:-0.211px;">mscorlib <span style="color:#dcdcdc">(<span style="color:#bcd1b1">4</span>.<span style="color:#bcd1b1">0</span>.<span style="color:#bcd1b1">0</span>.<span style="color:#bcd1b1">0</span>)</span></span>
</div>
<div style="position:absolute;left:8px;top:701px;width:248px;height:17.5px;background:#3e3e42;"></div>
<svg style="position:absolute;left:14px;top:705px;" width="6" height="9" viewBox="0 0 6 9"><path d="M5.5,0.3V8.7L0.3,4.5Z" fill="#999999"/></svg>
<svg style="position:absolute;left:244.7px;top:705.2px;" width="6" height="9" viewBox="0 0 6 9"><path d="M0.5,0.3V8.7L5.7,4.5Z" fill="#999999"/></svg>
<div style="position:absolute;left:25px;top:705px;width:138px;height:9px;background:#686868;"></div>
<div style="position:absolute;left:263px;top:57px;width:173px;height:21px;background:#3f3f46;"></div>
<span id="ta64b9c79" class="t" style="left:268px;top:59.5px;line-height:16px;font-size:12px;color:#ffffff;letter-spacing:-0.610px;">WebGrease (1.6.5135.21930)</span>
<svg style="position:absolute;left:421px;top:63.5px;" width="10" height="9" viewBox="0 0 10 9"><path d="M0.6,0.6L9.2,8.2M9.2,0.6L0.6,8.2" stroke="#8e8e92" stroke-width="1.3" fill="none"/></svg>
<div style="position:absolute;left:263px;top:78px;width:1029px;height:2px;background:#3f3f46;"></div>
<div style="position:absolute;left:263px;top:80px;width:17px;height:621.5px;background:#333333;"></div>
<div style="position:absolute;left:280px;top:80px;width:996px;height:621.5px;background:#1e1e1e;"></div>
<div style="position:absolute;left:280px;top:80px;width:996px;height:16px;background:transparent;border:2px solid #444446;box-sizing:border-box;"></div>
<div style="position:absolute;left:1276px;top:80px;width:17px;height:639px;background:#3e3e42;"></div>
<svg style="position:absolute;left:1280px;top:86.5px;" width="10" height="6" viewBox="0 0 10 6"><path d="M0.3,5.6H9.1L4.7,0.6Z" fill="#999999"/></svg>
<svg style="position:absolute;left:1280px;top:690.5px;" width="10" height="6" viewBox="0 0 10 6"><path d="M0.3,0.4H9.1L4.7,5.4Z" fill="#999999"/></svg>
<div style="position:absolute;left:1280px;top:97px;width:9px;height:327px;background:#686868;"></div>
<div style="position:absolute;left:263px;top:701.5px;width:1013px;height:17.5px;background:#3e3e42;"></div>
<div style="position:absolute;left:264px;top:702.6px;width:58px;height:15.6px;background:#1e1e1e;"></div>
<div style="position:absolute;left:310px;top:702.6px;width:1px;height:15.6px;background:#3e3e42;"></div>
<svg style="position:absolute;left:313px;top:709px;" width="8" height="5" viewBox="0 0 8 5"><path d="M0.5,0.5H7.5L4,4.3Z" fill="#c8c8c8"/></svg>
<span id="tedec57a4" class="t" style="left:268.5px;top:702.5px;line-height:16px;font-size:12px;color:#ffffff;letter-spacing:-1.661px;">100</span>
<span id="t21dbf0f6" class="t" style="left:288.8px;top:702.5px;line-height:16px;font-size:12px;color:#ffffff;letter-spacing:0.000px;">%</span>
<svg style="position:absolute;left:328.5px;top:706px;" width="6" height="9" viewBox="0 0 6 9"><path d="M5.5,0.3V8.7L0.3,4.5Z" fill="#55555a"/></svg>
<svg style="position:absolute;left:1265px;top:706px;" width="6" height="9" viewBox="0 0 6 9"><path d="M0.5,0.3V8.7L5.7,4.5Z" fill="#55555a"/></svg>
<div class="m" style="position:absolute;left:0;top:0;width:0;height:0;line-height:0;font-size:12px;letter-spacing:-0.200px;white-space:pre;">
<span style="position:absolute;left:308.0px;top:81px;line-height:16px;color:#2b91af">1</span>
<span style="position:absolute;left:333.5px;top:81px;line-height:16px;"><span style="color:#57a64a">// C:\inetpub\wwwroot\TeeTrove.Publish\bin\WebGrease.dll</span></span>
<span style="position:absolute;left:308.0px;top:97px;line-height:16px;color:#2b91af">2</span>
<span style="position:absolute;left:333.5px;top:97px;line-height:16px;"><span style="color:#57a64a">// WebGrease, Version=1.6.5135.21930, Culture=neutral, PublicKeyToken=31bf3856ad364e35</span></span>
<span style="position:absolute;left:308.0px;top:112.5px;line-height:13px;color:#2b91af">3</span>
<span style="position:absolute;left:308.0px;top:126px;line-height:16px;color:#2b91af">4</span>
<span style="position:absolute;left:333.5px;top:126px;line-height:16px;"><span style="color:#57a64a">// Timestamp: 52E025D4 (1/22/2014 12:11:00 PM)</span></span>
<span style="position:absolute;left:308.0px;top:141.5px;line-height:13px;color:#2b91af">5</span>
<span style="position:absolute;left:308.0px;top:155px;line-height:16px;color:#2b91af">6</span>
<span style="position:absolute;left:333.5px;top:155px;line-height:16px;"><span style="color:#569cd6">using</span><span style="color:#dcdcdc"> </span><span style="color:#ffd700">System</span><span style="color:#dcdcdc">;</span></span>
<span style="position:absolute;left:308.0px;top:171px;line-height:16px;color:#2b91af">7</span>
<span style="position:absolute;left:333.5px;top:171px;line-height:16px;"><span style="color:#569cd6">using</span><span style="color:#dcdcdc"> </span><span style="color:#ffd700">System</span><span style="color:#dcdcdc">.</span><span style="color:#ffd700">Diagnostics</span><span style="color:#dcdcdc">;</span></span>
<span style="position:absolute;left:308.0px;top:187px;line-height:16px;color:#2b91af">8</span>
<span style="position:absolute;left:333.5px;top:187px;line-height:16px;"><span style="color:#569cd6">using</span><span style="color:#dcdcdc"> </span><span style="color:#ffd700">System</span><span style="color:#dcdcdc">.</span><span style="color:#ffd700">Reflection</span><span style="color:#dcdcdc">;</span></span>
<span style="position:absolute;left:308.0px;top:203px;line-height:16px;color:#2b91af">9</span>
<span style="position:absolute;left:333.5px;top:203px;line-height:16px;"><span style="color:#569cd6">using</span><span style="color:#dcdcdc"> </span><span style="color:#ffd700">System</span><span style="color:#dcdcdc">.</span><span style="color:#ffd700">Resources</span><span style="color:#dcdcdc">;</span></span>
<span style="position:absolute;left:301.0px;top:219px;line-height:16px;color:#2b91af">10</span>
<span style="position:absolute;left:333.5px;top:219px;line-height:16px;"><span style="color:#569cd6">using</span><span style="color:#dcdcdc"> </span><span style="color:#ffd700">System</span><span style="color:#dcdcdc">.</span><span style="color:#ffd700">Runtime</span><span style="color:#dcdcdc">.</span><span style="color:#ffd700">CompilerServices</span><span style="color:#dcdcdc">;</span></span>
<span style="position:absolute;left:301.0px;top:235px;line-height:16px;color:#2b91af">11</span>
<span style="position:absolute;left:333.5px;top:235px;line-height:16px;"><span style="color:#569cd6">using</span><span style="color:#dcdcdc"> </span><span style="color:#ffd700">System</span><span style="color:#dcdcdc">.</span><span style="color:#ffd700">Runtime</span><span style="color:#dcdcdc">.</span><span style="color:#ffd700">InteropServices</span><span style="color:#dcdcdc">;</span></span>
<span style="position:absolute;left:301.0px;top:251px;line-height:16px;color:#2b91af">12</span>
<span style="position:absolute;left:333.5px;top:251px;line-height:16px;"><span style="color:#569cd6">using</span><span style="color:#dcdcdc"> </span><span style="color:#ffd700">System</span><span style="color:#dcdcdc">.</span><span style="color:#ffd700">Runtime</span><span style="color:#dcdcdc">.</span><span style="color:#ffd700">Versioning</span><span style="color:#dcdcdc">;</span></span>
<div style="position:absolute;left:332px;top:265px;width:944px;height:1px;background:#b0b0b0;"></div>
<span style="position:absolute;left:301.0px;top:266.5px;line-height:13px;color:#2b91af">13</span>
<span style="position:absolute;left:301.0px;top:280px;line-height:16px;color:#2b91af">14</span>
<span style="position:absolute;left:333.5px;top:280px;line-height:16px;"><span style="color:#dcdcdc">[</span><span style="color:#569cd6">assembly</span><span style="color:#dcdcdc">: </span><span style="color:#4ec9b0">AssemblyVersion</span><span style="color:#dcdcdc">(</span><span style="color:#d69d85">&quot;1.6.5135.21930&quot;</span><span style="color:#dcdcdc">)]</span></span>
<span style="position:absolute;left:301.0px;top:296px;line-height:16px;color:#2b91af">15</span>
<span style="position:absolute;left:333.5px;top:296px;line-height:16px;"><span style="color:#dcdcdc">[</span><span style="color:#569cd6">assembly</span><span style="color:#dcdcdc">: </span><span style="color:#4ec9b0">InternalsVisibleTo</span><span style="color:#dcdcdc">(</span><span style="color:#d69d85">&quot;WebGrease.Build,</span></span>
<span style="position:absolute;left:347.5px;top:312px;line-height:16px;"><span style="color:#d69d85">PublicKey=0024000004800000940000000602000000240000525341310004000001000100b5fc90e7027f67871e773a8fde8938c81dd402ba65b9201d60593e96c</span></span>
<span style="position:absolute;left:347.5px;top:328px;line-height:16px;"><span style="color:#d69d85">492651e889cc13f1415ebb53fac1131ae0bd333c5ee6021672d9718ea31a8aebd0da0072f25d87dba6fc90ffd598ed4da35e44c398c454307e8e33b8426143daec9</span></span>
<span style="position:absolute;left:347.5px;top:344px;line-height:16px;"><span style="color:#d69d85">f596836f97c8f74750e5975c64e2189f45def46b2a2b1247adc3652bf5c308055da9&quot;</span><span style="color:#dcdcdc">)]</span></span>
<span style="position:absolute;left:301.0px;top:360px;line-height:16px;color:#2b91af">16</span>
<span style="position:absolute;left:333.5px;top:360px;line-height:16px;"><span style="color:#dcdcdc">[</span><span style="color:#569cd6">assembly</span><span style="color:#dcdcdc">: </span><span style="color:#4ec9b0">Debuggable</span><span style="color:#dcdcdc">(</span><span style="color:#4ec9b0">DebuggableAttribute</span><span style="color:#dcdcdc">.</span><span style="color:#b8d7a3">DebuggingModes</span><span style="color:#dcdcdc">.</span><span style="color:#bd63c5">IgnoreSymbolStoreSequencePoints</span><span style="color:#dcdcdc">)]</span></span>
<span style="position:absolute;left:301.0px;top:376px;line-height:16px;color:#2b91af">17</span>
<span style="position:absolute;left:333.5px;top:376px;line-height:16px;"><span style="color:#dcdcdc">[</span><span style="color:#569cd6">assembly</span><span style="color:#dcdcdc">: </span><span style="color:#4ec9b0">CompilationRelaxations</span><span style="color:#dcdcdc">(</span><span style="color:#b5cea8">8</span><span style="color:#dcdcdc">)]</span></span>
<span style="position:absolute;left:301.0px;top:392px;line-height:16px;color:#2b91af">18</span>
<span style="position:absolute;left:333.5px;top:392px;line-height:16px;"><span style="color:#dcdcdc">[</span><span style="color:#569cd6">assembly</span><span style="color:#dcdcdc">: </span><span style="color:#4ec9b0">NeutralResourcesLanguage</span><span style="color:#dcdcdc">(</span><span style="color:#d69d85">&quot;en-US&quot;</span><span style="color:#dcdcdc">)]</span></span>
<span style="position:absolute;left:301.0px;top:408px;line-height:16px;color:#2b91af">19</span>
<span style="position:absolute;left:333.5px;top:408px;line-height:16px;"><span style="color:#dcdcdc">[</span><span style="color:#569cd6">assembly</span><span style="color:#dcdcdc">: </span><span style="color:#4ec9b0">InternalsVisibleTo</span><span style="color:#dcdcdc">(</span><span style="color:#d69d85">&quot;WG,</span></span>
<span style="position:absolute;left:347.5px;top:424px;line-height:16px;"><span style="color:#d69d85">PublicKey=0024000004800000940000000602000000240000525341310004000001000100b5fc90e7027f67871e773a8fde8938c81dd402ba65b9201d60593e96c</span></span>
<span style="position:absolute;left:347.5px;top:440px;line-height:16px;"><span style="color:#d69d85">492651e889cc13f1415ebb53fac1131ae0bd333c5ee6021672d9718ea31a8aebd0da0072f25d87dba6fc90ffd598ed4da35e44c398c454307e8e33b8426143daec9</span></span>
<span style="position:absolute;left:347.5px;top:456px;line-height:16px;"><span style="color:#d69d85">f596836f97c8f74750e5975c64e2189f45def46b2a2b1247adc3652bf5c308055da9&quot;</span><span style="color:#dcdcdc">)]</span></span>
<span style="position:absolute;left:301.0px;top:472px;line-height:16px;color:#2b91af">20</span>
<span style="position:absolute;left:333.5px;top:472px;line-height:16px;"><span style="color:#dcdcdc">[</span><span style="color:#569cd6">assembly</span><span style="color:#dcdcdc">: </span><span style="color:#4ec9b0">RuntimeCompatibility</span><span style="color:#dcdcdc">(</span><span style="color:#329a9e">WrapNonExceptionThrows</span><span style="color:#b4b4b4"> = </span><span style="color:#569cd6">true</span><span style="color:#dcdcdc">)]</span></span>
<span style="position:absolute;left:301.0px;top:488px;line-height:16px;color:#2b91af">21</span>
<span style="position:absolute;left:333.5px;top:488px;line-height:16px;"><span style="color:#dcdcdc">[</span><span style="color:#569cd6">assembly</span><span style="color:#dcdcdc">: </span><span style="color:#4ec9b0">TargetFramework</span><span style="color:#dcdcdc">(</span><span style="color:#d69d85">&quot;.NETFramework,Version=v4.0&quot;</span><span style="color:#dcdcdc">, </span><span style="color:#329a9e">FrameworkDisplayName</span><span style="color:#b4b4b4"> = </span><span style="color:#d69d85">&quot;.NET Framework 4&quot;</span><span style="color:#dcdcdc">)]</span></span>
<span style="position:absolute;left:301.0px;top:504px;line-height:16px;color:#2b91af">22</span>
<span style="position:absolute;left:333.5px;top:504px;line-height:16px;"><span style="color:#dcdcdc">[</span><span style="color:#569cd6">assembly</span><span style="color:#dcdcdc">: </span><span style="color:#4ec9b0">CLSCompliant</span><span style="color:#dcdcdc">(</span><span style="color:#569cd6">true</span><span style="color:#dcdcdc">)]</span></span>
<span style="position:absolute;left:301.0px;top:520px;line-height:16px;color:#2b91af">23</span>
<span style="position:absolute;left:333.5px;top:520px;line-height:16px;"><span style="color:#dcdcdc">[</span><span style="color:#569cd6">assembly</span><span style="color:#dcdcdc">: </span><span style="color:#4ec9b0">AssemblyTitle</span><span style="color:#dcdcdc">(</span><span style="color:#d69d85">&quot;WebGrease&quot;</span><span style="color:#dcdcdc">)]</span></span>
<span style="position:absolute;left:301.0px;top:536px;line-height:16px;color:#2b91af">24</span>
<span style="position:absolute;left:333.5px;top:536px;line-height:16px;"><span style="color:#dcdcdc">[</span><span style="color:#569cd6">assembly</span><span style="color:#dcdcdc">: </span><span style="color:#4ec9b0">AssemblyDescription</span><span style="color:#dcdcdc">(</span><span style="color:#d69d85">&quot;&quot;</span><span style="color:#dcdcdc">)]</span></span>
<span style="position:absolute;left:301.0px;top:552px;line-height:16px;color:#2b91af">25</span>
<span style="position:absolute;left:333.5px;top:552px;line-height:16px;"><span style="color:#dcdcdc">[</span><span style="color:#569cd6">assembly</span><span style="color:#dcdcdc">: </span><span style="color:#4ec9b0">AssemblyConfiguration</span><span style="color:#dcdcdc">(</span><span style="color:#d69d85">&quot;&quot;</span><span style="color:#dcdcdc">)]</span></span>
<span style="position:absolute;left:301.0px;top:568px;line-height:16px;color:#2b91af">26</span>
<span style="position:absolute;left:333.5px;top:568px;line-height:16px;"><span style="color:#dcdcdc">[</span><span style="color:#569cd6">assembly</span><span style="color:#dcdcdc">: </span><span style="color:#4ec9b0">AssemblyCompany</span><span style="color:#dcdcdc">(</span><span style="color:#d69d85">&quot;Microsoft&quot;</span><span style="color:#dcdcdc">)]</span></span>
<span style="position:absolute;left:301.0px;top:584px;line-height:16px;color:#2b91af">27</span>
<span style="position:absolute;left:333.5px;top:584px;line-height:16px;"><span style="color:#dcdcdc">[</span><span style="color:#569cd6">assembly</span><span style="color:#dcdcdc">: </span><span style="color:#4ec9b0">AssemblyProduct</span><span style="color:#dcdcdc">(</span><span style="color:#d69d85">&quot;WebGrease&quot;</span><span style="color:#dcdcdc">)]</span></span>
<span style="position:absolute;left:301.0px;top:600px;line-height:16px;color:#2b91af">28</span>
<span style="position:absolute;left:333.5px;top:600px;line-height:16px;"><span style="color:#dcdcdc">[</span><span style="color:#569cd6">assembly</span><span style="color:#dcdcdc">: </span><span style="color:#4ec9b0">AssemblyCopyright</span><span style="color:#dcdcdc">(</span><span style="color:#d69d85">&quot;Copyright © Microsoft 2013&quot;</span><span style="color:#dcdcdc">)]</span></span>
<span style="position:absolute;left:301.0px;top:616px;line-height:16px;color:#2b91af">29</span>
<span style="position:absolute;left:333.5px;top:616px;line-height:16px;"><span style="color:#dcdcdc">[</span><span style="color:#569cd6">assembly</span><span style="color:#dcdcdc">: </span><span style="color:#4ec9b0">AssemblyTrademark</span><span style="color:#dcdcdc">(</span><span style="color:#d69d85">&quot;&quot;</span><span style="color:#dcdcdc">)]</span></span>
<span style="position:absolute;left:301.0px;top:632px;line-height:16px;color:#2b91af">30</span>
<span style="position:absolute;left:333.5px;top:632px;line-height:16px;"><span style="color:#dcdcdc">[</span><span style="color:#569cd6">assembly</span><span style="color:#dcdcdc">: </span><span style="color:#4ec9b0">ComVisible</span><span style="color:#dcdcdc">(</span><span style="color:#569cd6">false</span><span style="color:#dcdcdc">)]</span></span>
<span style="position:absolute;left:301.0px;top:648px;line-height:16px;color:#2b91af">31</span>
<span style="position:absolute;left:333.5px;top:648px;line-height:16px;"><span style="color:#dcdcdc">[</span><span style="color:#569cd6">assembly</span><span style="color:#dcdcdc">: </span><span style="color:#4ec9b0">Guid</span><span style="color:#dcdcdc">(</span><span style="color:#d69d85">&quot;9ff31c36-1ada-46c9-ad6b-28c3560f5ecc&quot;</span><span style="color:#dcdcdc">)]</span></span>
<span style="position:absolute;left:301.0px;top:663.5px;line-height:13px;color:#2b91af">32</span>
</div>
<div style="position:absolute;left:124.8px;top:44px;width:262px;height:168.6px;background:#1b1b1c;border:1px solid #333337;border-left-color:#1b1b1c;box-sizing:border-box;box-shadow:1.4px 1.6px 0.8px rgba(0,0,0,0.8);"></div>
<div style="position:absolute;left:155px;top:70px;width:229.5px;height:1px;background:#39393d;"></div>
<div style="position:absolute;left:155px;top:161.2px;width:229.5px;height:1px;background:#39393d;"></div>
<div style="position:absolute;left:155px;top:186px;width:229.5px;height:1px;background:#39393d;"></div>
<span id="te591aafc" class="t" style="left:158.7px;top:50.6px;line-height:16px;font-size:12px;color:#ffffff;letter-spacing:0.053px;">Windows</span>
<svg style="position:absolute;left:373.7px;top:54.9px;" width="5" height="8" viewBox="0 0 5 8"><path d="M0.2,0.2V7.8L4.6,4Z" fill="#ffffff"/></svg>
<span id="ta6a1061d" class="t" style="left:158.7px;top:75.5px;line-height:16px;font-size:12px;color:#ffffff;letter-spacing:-0.096px;">Start Debugging...</span>
<span id="t5477d588" class="t" style="right:926.4px;top:75.5px;line-height:16px;font-size:12px;color:#ffffff;letter-spacing:-0.900px;">F5</span>
<svg style="position:absolute;left:134.4px;top:76.1px;" width="10" height="13" viewBox="0 0 10 13"><path d="M0.6,0.2L9.3,6.5L0.6,12.8Z" fill="#7dc67d"/></svg>
<span id="t88e46234" class="t" style="left:158.7px;top:97.5px;line-height:16px;font-size:12px;color:#656565;letter-spacing:0.053px;">Start Without Debugging</span>
<span id="tb8f7ec8d" class="t" style="left:329.2px;top:97.5px;line-height:16px;font-size:12px;color:#656565;letter-spacing:-0.179px;">Ctrl+F5</span>
<svg style="position:absolute;left:134.4px;top:98.1px;" width="10" height="13" viewBox="0 0 10 13"><path d="M1.6,2.2L7.6,6.4L1.6,10.6Z" fill="none" stroke="#3f6b43" stroke-width="2"/></svg>
<div style="position:absolute;left:124.8px;top:112.5px;width:263.4px;height:25.2px;background:#333334;border:3.3px solid #ff0000;box-sizing:border-box;"></div>
<span id="t63f244d5" class="t" style="left:158.7px;top:119.5px;line-height:16px;font-size:12px;color:#ffffff;letter-spacing:-0.166px;">Attach to Process...</span>
<span id="t9fc08c13" class="t" style="left:311.3px;top:119.5px;line-height:16px;font-size:12px;color:#ffffff;letter-spacing:0.157px;">Ctrl+Alt+P</span>
<svg style="position:absolute;left:130px;top:118px;" width="18" height="17" viewBox="0 0 18 17"><circle cx="12.1" cy="6.0" r="2.5" fill="none" stroke="#d0d0d0" stroke-width="1.0"/><path d="M14.60,6.00L16.30,6.00" stroke="#d0d0d0" stroke-width="1.25"/><path d="M13.87,7.77L15.07,8.97" stroke="#d0d0d0" stroke-width="1.25"/><path d="M12.10,8.50L12.10,10.20" stroke="#d0d0d0" stroke-width="1.25"/><path d="M10.33,7.77L9.13,8.97" stroke="#d0d0d0" stroke-width="1.25"/><path d="M9.60,6.00L7.90,6.00" stroke="#d0d0d0" stroke-width="1.25"/><path d="M10.33,4.23L9.13,3.03" stroke="#d0d0d0" stroke-width="1.25"/><path d="M12.10,3.50L12.10,1.80" stroke="#d0d0d0" stroke-width="1.25"/><path d="M13.87,4.23L15.07,3.03" stroke="#d0d0d0" stroke-width="1.25"/><circle cx="12.1" cy="6.0" r="1.0" fill="#d0d0d0"/><circle cx="5.9" cy="11.9" r="2.2" fill="none" stroke="#d0d0d0" stroke-width="1.0"/><path d="M8.10,11.90L9.70,11.90" stroke="#d0d0d0" stroke-width="1.2"/><path d="M7.46,13.46L8.59,14.59" stroke="#d0d0d0" stroke-width="1.2"/><path d="M5.90,14.10L5.90,15.70" stroke="#d0d0d0" stroke-width="1.2"/><path d="M4.34,13.46L3.21,14.59" stroke="#d0d0d0" stroke-width="1.2"/><path d="M3.70,11.90L2.10,11.90" stroke="#d0d0d0" stroke-width="1.2"/><path d="M4.34,10.34L3.21,9.21" stroke="#d0d0d0" stroke-width="1.2"/><path d="M5.90,9.70L5.90,8.10" stroke="#d0d0d0" stroke-width="1.2"/><path d="M7.46,10.34L8.59,9.21" stroke="#d0d0d0" stroke-width="1.2"/><circle cx="5.9" cy="11.9" r="0.9" fill="#d0d0d0"/></svg>
<span id="tcf6c1fe7" class="t" style="left:158.7px;top:141.5px;line-height:16px;font-size:12px;color:#ffffff;letter-spacing:-0.082px;">Attach to Process (Unity)...</span>
<svg style="position:absolute;left:132px;top:141px;" width="14" height="16" viewBox="0 0 14 16"><g fill="none" stroke="#d0d0d0" stroke-width="1"><path d="M7,1L13,4.3V11.4L7,14.8L1,11.4V4.3Z"/><path d="M1,4.3L7,7.6L13,4.3M1,7.6L7,10.9L13,7.6M7,10.9V14.8M4,2.7L10,6M10,2.7L4,6" stroke-width="0.9"/></g></svg>
<span id="tf8470255" class="t" style="left:158.7px;top:166.5px;line-height:16px;font-size:12px;color:#656565;letter-spacing:-0.060px;">Toggle Breakpoint</span>
<span id="tfb91953a" class="t" style="right:926.4px;top:166.5px;line-height:16px;font-size:12px;color:#656565;letter-spacing:-0.900px;">F9</span>
<span id="t82cea4f3" class="t" style="left:158.7px;top:191.5px;line-height:16px;font-size:12px;color:#ffffff;letter-spacing:-0.073px;">Options...</span>
<svg style="position:absolute;left:131px;top:191px;" width="16" height="16" viewBox="0 0 16 16"><path d="M14.99,6.63L14.99,9.17L13.26,9.53L12.84,10.54L13.81,12.02L12.02,13.81L10.54,12.84L9.53,13.26L9.17,14.99L6.63,14.99L6.27,13.26L5.26,12.84L3.78,13.81L1.99,12.02L2.96,10.54L2.54,9.53L0.81,9.17L0.81,6.63L2.54,6.27L2.96,5.26L1.99,3.78L3.78,1.99L5.26,2.96L6.27,2.54L6.63,0.81L9.17,0.81L9.53,2.54L10.54,2.96L12.02,1.99L13.81,3.78L12.84,5.26L13.26,6.27Z" fill="#d0d0d0"/><circle cx="7.9" cy="7.9" r="3.1" fill="#1b1b1c"/><circle cx="7.9" cy="7.9" r="1.4" fill="#d0d0d0"/></svg>
<div style="position:absolute;left:125.6px;top:23.4px;width:53.2px;height:24.3px;background:#1b1b1c;border:3px solid #ff0000;box-sizing:border-box;"></div>
<span id="tbc37a1c1" class="t" style="left:134.2px;top:27.5px;line-height:16px;font-size:12px;color:#ffffff;letter-spacing:-0.140px;">Debug</span>
</body></html>
